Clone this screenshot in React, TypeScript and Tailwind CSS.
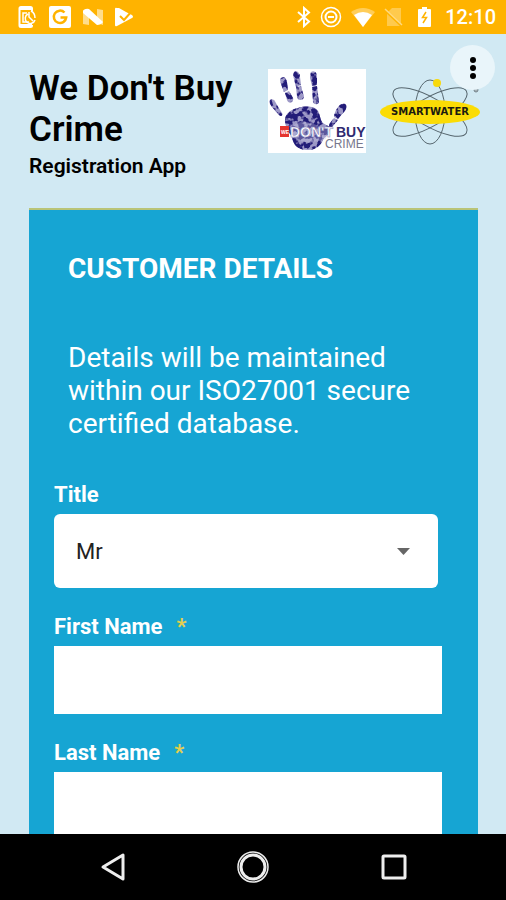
import { useState } from "react";

const blobs = [
  "M2 31c3-2 5 1 7 5l5 8c1 3-1 4-3 2l-7-8c-2-3-3-5-2-7z",
  "M13 9c3-2 5 0 6 4l1 8-4 2-3-8c-1-3-1-5 0-6z",
  "M17 24l4-2 4 7c1 4-4 7-6 2z",
  "M26 3c3-2 6 1 6 5l1 8-5 2-2-8c-1-3-1-5 0-7z",
  "M28 18l5-1 3 11c-1 4-6 4-7 0z",
  "M43 3c3-2 6 0 6 5v8l-5 1-2-8c0-3 0-5 1-6z",
  "M44 18l5-1 2 16c-1 3-5 3-6 0z",
  "M70 38c3-4 7-4 8-2s0 6-4 9l-4 5-4-2c0-4 2-7 4-10z",
  "M66 49l4 2-6 7c-3 1-4-1-2-4z",
  "M17 50c1-6 7-10 13-11 7-2 14-2 18 1 5 4 3 10 7 14 4 3 8 3 7 8-2 6-5 5-7 9-3 7-9 10-15 10-8 0-13-3-15-9-2-8-9-14-8-22z",
];

function StatusBar() {
  return (
    <div className="flex h-[34px] shrink-0 items-center justify-between bg-[#ffb300] pr-[10px] pl-[17px] text-white">
      <div className="flex items-center gap-[10px]">
        <svg width="22" height="24" viewBox="0 0 22 24" fill="none" stroke="currentColor" strokeWidth="2">
          <path d="M15 6V3.500Q15 2 13.500 2H4Q2.500 2 2.500 3.500V20.500Q2.500 22 4 22H13.500Q15 22 15 20.500V20" />
          <path d="M3 3.500H15M3 20.500H15" strokeWidth="3" />
          <path d="M10 8H6V17H12" strokeWidth="1.500" />
          <path d="M11 9A5 5 0 1 0 18 15M12 7V12L16 16M14 6Q18 8 18 13" strokeWidth="1.500" />
        </svg>
        <svg width="23" height="24" viewBox="0 0 23 24">
          <rect x="0" y="1" width="22" height="22" rx="2" fill="currentColor" />
          <path d="M15.500 7.500A6.200 6.200 0 1 0 17.200 12.500H11.500" fill="none" stroke="#ffb300" strokeWidth="2.500" />
        </svg>
        <svg width="22" height="24" viewBox="0 0 22 24">
          <path d="M1 5 7 4V20L1 19ZM15 4 21 5V20L15 18Z" fill="currentColor" opacity="0.55" />
          <path d="M1 6Q3 3 7 4L21 17Q19 20 15 20L1 8Z" fill="currentColor" />
        </svg>
        <svg width="22" height="24" viewBox="0 0 22 24">
          <path d="M3 3Q1 2 1 4V20Q1 22 3 21L18 13Q20 12 18 10L12 7 5 3Z" fill="currentColor" />
          <path d="M6 11 10 15 18 6" fill="none" stroke="#ffb300" strokeWidth="2" />
        </svg>
      </div>
      <div className="flex items-center gap-[9px]">
        <svg width="14" height="22" viewBox="0 0 14 22" fill="none" stroke="currentColor" strokeWidth="2">
          <path d="M1 6 12 15.500 7 20V2L12 6.500 1 16" />
        </svg>
        <svg width="22" height="22" viewBox="0 0 22 22" fill="none" stroke="currentColor">
          <circle cx="11" cy="11" r="9.500" strokeWidth="1.500" />
          <circle cx="11" cy="11" r="5.500" strokeWidth="2" />
          <path d="M8 11H14" strokeWidth="2" />
        </svg>
        <svg width="24" height="22" viewBox="0 0 24 22" fill="currentColor">
          <path d="M0 6Q12-2 24 6L12 21Z" opacity="0.35" />
          <path d="M3 9Q12 3 21 9L12 21Z" />
        </svg>
        <svg width="20" height="22" viewBox="0 0 20 22">
          <path d="M8 2H17V20H3V7Z" fill="currentColor" opacity="0.3" />
          <path d="M1 4 18 20" stroke="#ffb300" strokeWidth="3" />
          <path d="M1 3 18 19" stroke="currentColor" strokeWidth="1.500" opacity="0.5" />
        </svg>
        <svg width="23" height="22" viewBox="0 0 23 22">
          <path d="M9 1H14V3H17Q18 3 18 4V20Q18 21 17 21H6Q5 21 5 20V4Q5 3 6 3H9Z" fill="currentColor" />
          <path d="M13 6 9.500 11.500H13.500L10 17" fill="none" stroke="#ffb300" strokeWidth="1.500" />
        </svg>
        <span className="text-[20px] leading-6 font-medium">12:10</span>
      </div>
    </div>
  );
}

function HandLogo() {
  return (
    <svg className="shrink-0" width="98" height="84" viewBox="0 0 98 84" role="img" aria-label="We Don't Buy Crime">
      <defs>
        <filter id="print" x="0" y="0" width="1" height="1">
          <feTurbulence type="fractalNoise" baseFrequency="0.2" numOctaves="2" seed="4" result="noise" />
          <feColorMatrix in="noise" type="matrix" values="0 0 0 0 0  0 0 0 0 0  0 0 0 0 0  0 0 0 7 -2.900" result="mask" />
          <feComposite in="SourceGraphic" in2="mask" operator="in" />
        </filter>
      </defs>
      <rect width="98" height="84" fill="#fff" />
      <g fill="#9c98c6">
        {blobs.map((d) => <path key={d} d={d} />)}
      </g>
      <g fill="#231b78" filter="url(#print)">
        {blobs.map((d) => <path key={d} d={d} />)}
      </g>
      <path d="M22 60Q30 50 42 54T61 59L58 70Q40 77 25 69Z" fill="#c9c7e2" opacity="0.35" />
      <g fontFamily="Liberation Sans, sans-serif">
        <rect x="12" y="57" width="9" height="11" fill="#e5352f" />
        <text x="13" y="65" fontSize="5" fontWeight="700" fill="#fff">WE</text>
        <text x="22" y="68" fontSize="14" fontWeight="700" fill="#fff" stroke="#8984b8" strokeWidth="0.500">DON'T</text>
        <text x="68" y="68" fontSize="14" fontWeight="700" fill="#2f2a70">BUY</text>
        <text x="57" y="79" fontSize="12" fill="#77778c">CRIME</text>
      </g>
    </svg>
  );
}

function SmartWaterLogo() {
  return (
    <svg className="mt-[5px] shrink-0" width="100" height="72" viewBox="0 0 100 72" role="img" aria-label="SmartWater">
      <g fill="none" stroke="#56666e" strokeWidth="1">
        <ellipse cx="50" cy="38" rx="15" ry="32" />
        <ellipse cx="50" cy="38" rx="42" ry="14" transform="rotate(30 50 38)" />
        <ellipse cx="50" cy="38" rx="42" ry="14" transform="rotate(-30 50 38)" />
      </g>
      <circle cx="57" cy="9" r="4" fill="#f8d90c" />
      <ellipse cx="50" cy="38" rx="50" ry="12" fill="#fbdc05" />
      <text x="50" y="41" fontSize="10" fontWeight="700" textAnchor="middle" fontFamily="DejaVu Sans, sans-serif" fill="#1c1b10">SMARTWATER</text>
      <circle cx="96" cy="16" r="2" fill="#a4b0b5" stroke="#75838a" />
    </svg>
  );
}

function TextField({ id, label }: { id: string; label: string }) {
  return (
    <div className="mt-[26px]">
      <label htmlFor={id} className="block text-[22px] leading-[26px] font-bold">
        {label}
        <span className="ml-[14px] text-[#e3cf4f]">*</span>
      </label>
      <input id={id} type="text" required className="mt-[6px] block h-[68px] w-full bg-white px-6 text-[22px] text-[#222] outline-none" />
    </div>
  );
}

export default function App() {
  const [title, setTitle] = useState("Mr");
  return (
    <div className="flex h-screen flex-col overflow-hidden bg-[#d1e9f3] font-[Roboto,sans-serif]">
      <StatusBar />
      <div className="relative flex min-h-0 flex-1 flex-col">
        <button type="button" aria-label="Menu" className="absolute top-[11px] right-[11px] z-10 flex size-[45px] items-center justify-center rounded-full bg-[#e9f5fa]">
          <svg width="6" height="24" viewBox="0 0 6 24" fill="#000">
            <circle cx="3" cy="4" r="3" />
            <circle cx="3" cy="12" r="3" />
            <circle cx="3" cy="20" r="3" />
          </svg>
        </button>
        <main className="min-h-0 flex-1 overflow-y-auto [scrollbar-width:none]">
          <header className="flex items-start pt-[34px] pr-[26px] pl-[29px] text-black">
            <div className="min-w-0 flex-1">
              <h1 className="text-[35px] leading-[41px] font-semibold">We Don't Buy Crime</h1>
              <p className="mt-[3px] text-[21px] leading-[26px] font-semibold">Registration App</p>
            </div>
            <div className="mt-px flex shrink-0 gap-[14px]">
              <HandLogo />
              <SmartWaterLogo />
            </div>
          </header>
          <section className="mr-7 ml-[29px] mt-[29px] border-t-2 border-[#b9c477] bg-[#16a5d3] pr-9 pb-10 pl-[25px] text-white">
            <div className="px-[14px] pt-[42px]">
              <h2 className="text-[28px] leading-[33px] font-bold">CUSTOMER DETAILS</h2>
              <p className="mt-14 text-[28px] leading-[33px]">Details will be maintained within our ISO27001 secure certified database.</p>
            </div>
            <form>
              <div className="mt-[42px]">
                <label htmlFor="title" className="block text-[22px] leading-[26px] font-bold">Title</label>
                <div className="relative mt-[6px] mr-1">
                  <select id="title" value={title} onChange={(e) => setTitle(e.target.value)} className="block h-[74px] w-full appearance-none rounded-md bg-white px-[22px] text-[22px] text-[#222] outline-none">
                    <option>Mr</option>
                    <option>Mrs</option>
                    <option>Miss</option>
                    <option>Ms</option>
                  </select>
                  <svg className="pointer-events-none absolute top-[34px] right-7" width="13" height="7" viewBox="0 0 13 7" fill="#666">
                    <path d="M0 0H13L6.500 7Z" />
                  </svg>
                </div>
              </div>
              <TextField id="first-name" label="First Name" />
              <TextField id="last-name" label="Last Name" />
            </form>
          </section>
        </main>
      </div>
      <nav className="flex h-[66px] shrink-0 items-center justify-around bg-black px-[42px] text-[#eee]">
        <button type="button" aria-label="Back" className="flex size-10 items-center justify-center">
          <svg width="26" height="30" viewBox="0 0 26 30" fill="none" stroke="currentColor" strokeWidth="3" strokeLinejoin="round">
            <path d="M24 3V27L4 15Z" />
          </svg>
        </button>
        <button type="button" aria-label="Home" className="flex size-10 items-center justify-center">
          <svg width="34" height="34" viewBox="0 0 34 34" fill="none" stroke="currentColor">
            <circle cx="17" cy="17" r="15" strokeWidth="1.500" />
            <circle cx="17" cy="17" r="12" strokeWidth="3" />
          </svg>
        </button>
        <button type="button" aria-label="Recent apps" className="flex size-10 items-center justify-center">
          <svg width="26" height="26" viewBox="0 0 26 26" fill="none" stroke="currentColor" strokeWidth="3">
            <rect x="2" y="2" width="22" height="22" rx="1" />
          </svg>
        </button>
      </nav>
    </div>
  );
}
